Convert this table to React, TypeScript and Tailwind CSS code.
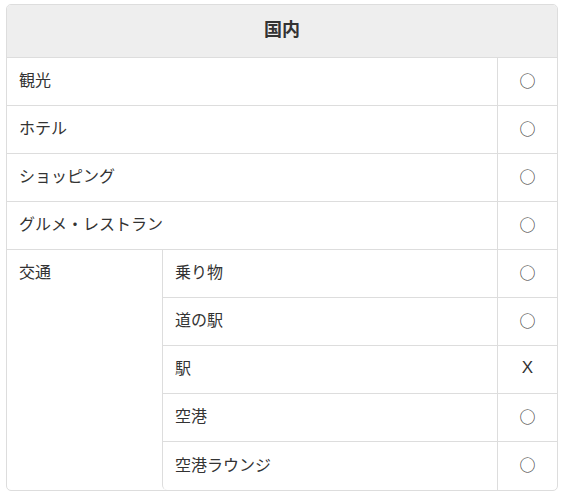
import React from "react";

const top = [
    { name: "観光", value: "○" },
    { name: "ホテル", value: "○" },
    { name: "ショッピング", value: "○" },
    { name: "グルメ・レストラン", value: "○" },
];

const transport = [
    { name: "乗り物", value: "○" },
    { name: "道の駅", value: "○" },
    { name: "駅", value: "X" },
    { name: "空港", value: "○" },
    { name: "空港ラウンジ", value: "○" },
];

function Row({ name, value, last }: { name: string; value: string; last?: boolean }) {
    return (
        <div className={`flex h-[48px] ${last ? "" : "border-b border-[#ddd]"}`}>
            <div className="flex-1 flex items-center px-3 pb-[5px]">{name}</div>
            <div className="w-[60px] border-l border-[#ddd] flex items-center justify-center pb-[4px]">
                {value === "X" ? <span className="text-[17px]" style={{ fontFamily: '"Liberation Sans", sans-serif' }}>X</span> : value}
            </div>
        </div>
    );
}

export default function App() {
    return (
        <div
            className="bg-white min-h-[494px] pt-[4px] pl-[6px] text-[16px] text-[#333]"
            style={{ fontFamily: '"Noto Sans CJK JP", "Noto Sans", sans-serif' }}
        >
            <div className="w-[552px] border border-[#ddd] rounded-[5px] overflow-hidden">
                {/* Header */}
                <div className="h-[53px] bg-[#eee] border-b border-[#ddd] flex items-center justify-center font-bold text-[18px] pb-[5px]">
                    国内
                </div>

                {top.map((r) => (
                    <Row key={r.name} name={r.name} value={r.value} />
                ))}

                {/* 交通 */}
                <div className="flex">
                    <div className="w-[155px] px-3 pt-[8px]">
                        <div className="h-[26px] flex items-center">交通</div>
                    </div>
                    <div className="flex-1 flex flex-col border-l border-[#ddd] rounded-bl-[5px]">
                        {transport.map((r, i) => (
                            <Row key={r.name} name={r.name} value={r.value} last={i === transport.length - 1} />
                        ))}
                    </div>
                </div>
            </div>
        </div>
    );
}
